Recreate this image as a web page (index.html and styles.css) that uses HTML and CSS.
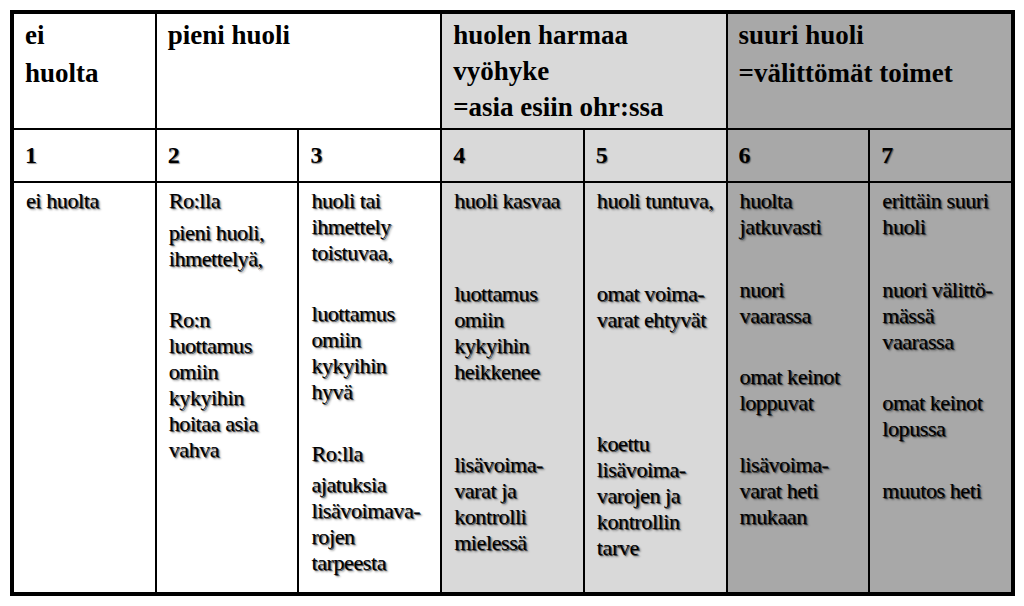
FILE: index.html
```html
<!DOCTYPE html>
<html>
<head>
<meta charset="utf-8">
<title>Huolen vyöhykkeet</title>
<link rel="stylesheet" href="styles.css">
</head>
<body>
<div class="chart">
  <div class="cell head white"><p>ei<br>huolta</p></div>
  <div class="cell head white span2"><p>pieni huoli</p></div>
  <div class="cell head light span2 head-grey"><p>huolen harmaa<br>vyöhyke<br>=asia esiin ohr:ssa</p></div>
  <div class="cell head dark span2"><p>suuri huoli<br>=välittömät toimet</p></div>

  <div class="cell num white"><p>1</p></div>
  <div class="cell num white"><p>2</p></div>
  <div class="cell num white"><p>3</p></div>
  <div class="cell num light"><p>4</p></div>
  <div class="cell num light"><p>5</p></div>
  <div class="cell num dark"><p>6</p></div>
  <div class="cell num dark"><p>7</p></div>

  <div class="cell txt white">
    <p>ei huolta</p>
  </div>
  <div class="cell txt white">
    <p>Ro:lla</p>
    <p class="g6">pieni huoli,<br>ihmettelyä,</p>
    <p class="g35">Ro:n<br>luottamus<br>omiin<br>kykyihin<br>hoitaa asia<br>vahva</p>
  </div>
  <div class="cell txt white">
    <p>huoli tai<br>ihmettely<br>toistuvaa,</p>
    <p class="g35">luottamus<br>omiin<br>kykyihin<br>hyvä</p>
    <p class="g36">Ro:lla</p>
    <p class="g5">ajatuksia<br>lisävoimava-<br>rojen<br>tarpeesta</p>
  </div>
  <div class="cell txt light">
    <p>huoli kasvaa</p>
    <p class="g67">luottamus<br>omiin<br>kykyihin<br>heikkenee</p>
    <p class="g67">lisävoima-<br>varat ja<br>kontrolli<br>mielessä</p>
  </div>
  <div class="cell txt light">
    <p>huoli tuntuva,</p>
    <p class="g67">omat voima-<br>varat ehtyvät</p>
    <p class="g98">koettu<br>lisävoima-<br>varojen ja<br>kontrollin<br>tarve</p>
  </div>
  <div class="cell txt dark">
    <p>huolta<br>jatkuvasti</p>
    <p class="g37">nuori<br>vaarassa</p>
    <p class="g35">omat keinot<br>loppuvat</p>
    <p class="g36">lisävoima-<br>varat heti<br>mukaan</p>
  </div>
  <div class="cell txt dark">
    <p>erittäin suuri<br>huoli</p>
    <p class="g37">nuori välittö-<br>mässä<br>vaarassa</p>
    <p class="g35">omat keinot<br>lopussa</p>
    <p class="g36">muutos heti</p>
  </div>
</div>
</body>
</html>
```

FILE: styles.css
```css
html {
  margin: 0;
  padding: 0;
}

body {
  margin: 0;
  padding: 0;
  background: #ffffff;
  color: #000;
  font-family: "Liberation Serif", serif;
}

.chart {
  margin: 10px 0 0 10px;
  width: 997px;
  padding: 4px;
  background: #000;
  display: grid;
  grid-template-columns: repeat(7, 1fr);
  grid-template-rows: 114px 51px 409px;
  gap: 2px;
}

.cell {
  padding-left: 11px;
  padding-right: 4px;
  box-sizing: border-box;
  overflow: hidden;
}

.cell p {
  margin: 0;
  white-space: nowrap;
  font-family: "Liberation Serif", serif;
}

.white { background: #ffffff; }
.light { background: #d9d9d9; }
.dark  { background: #a8a8a8; }

.span2 { grid-column: span 2; }

.head p {
  font-weight: bold;
  font-size: 27px;
  line-height: 38px;
  padding-top: 2px;
}

.head-grey p {
  line-height: 36px;
  padding-top: 3px;
}

.num p {
  font-weight: bold;
  font-size: 24px;
  line-height: 51px;
  text-shadow: 1px 1px 1px rgba(0, 0, 0, 0.45);
}

.txt {
  padding-top: 5px;
  padding-left: 12px;
}

.txt p {
  font-size: 22px;
  line-height: 26px;
  letter-spacing: -0.4px;
  text-shadow: 1px 1px 0 rgba(0, 0, 0, 0.6), 2px 2px 2px rgba(0, 0, 0, 0.4);
}

.txt .g5  { margin-top: 5px; }
.txt .g6  { margin-top: 6px; }
.txt .g35 { margin-top: 35px; }
.txt .g36 { margin-top: 36px; }
.txt .g37 { margin-top: 37px; }
.txt .g67 { margin-top: 67px; }
.txt .g98 { margin-top: 98px; }
```
